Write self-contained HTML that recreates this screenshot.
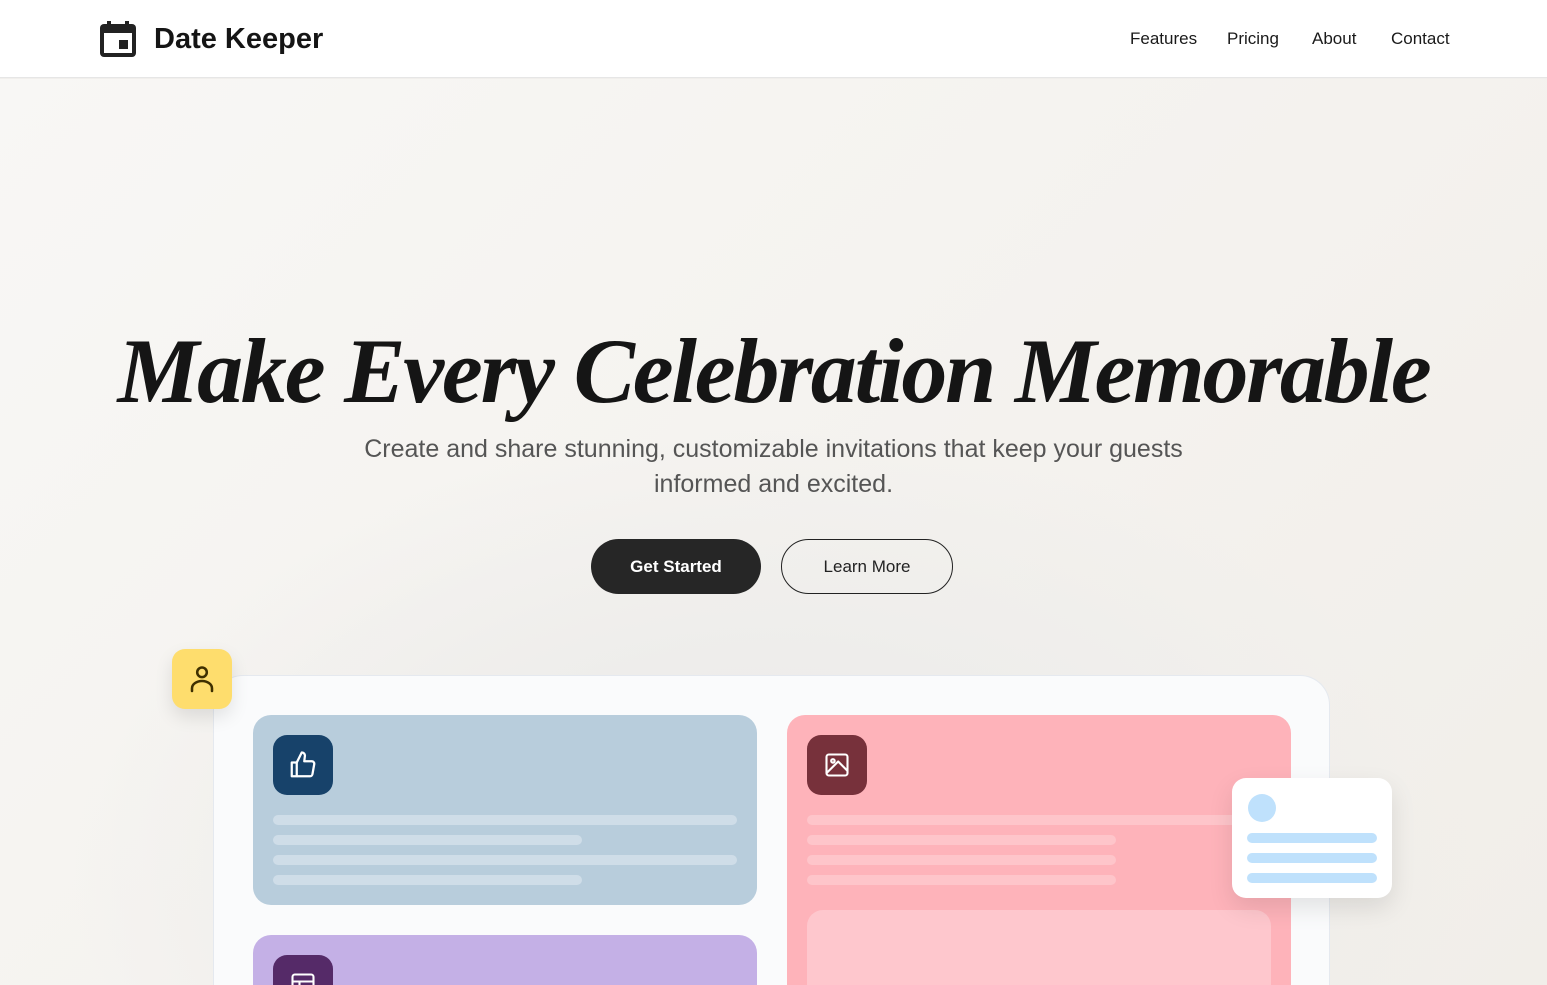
<!DOCTYPE html>
<html><head><meta charset="utf-8"><style>
*{margin:0;padding:0;box-sizing:border-box}
html,body{width:1547px;height:985px;overflow:hidden}
body{font-family:"Liberation Sans",sans-serif;background:#f1efec;position:relative}
.hdr{position:absolute;left:0;top:0;width:1547px;height:78px;background:#fff;border-bottom:1px solid #e6e6e6}
.logo{position:absolute;left:99px;top:20px;display:flex;align-items:center}
.logo span{font-size:29px;font-weight:bold;color:#151515;margin-left:17px}
.nav{position:absolute;top:29px;font-size:17px;color:#1a1a1a}
.hero{position:absolute;left:0;top:79px;width:1547px;height:906px;background:radial-gradient(ellipse 700px 450px at 773px 800px,#e8e8ea 0%,#eeedeb 50%,rgba(241,239,236,0) 100%),linear-gradient(135deg,#f8f7f5,#f1eee9)}
h1{position:absolute;left:0;width:1547px;top:318px;text-align:center;font-family:"Liberation Serif",serif;font-style:italic;font-weight:bold;font-size:92px;letter-spacing:-2.2px;color:#151515;white-space:nowrap}
.sub{position:absolute;left:0;width:1547px;top:432px;text-align:center;font-size:25px;line-height:35px;color:#555}
.btn{position:absolute;top:539px;height:55px;border-radius:28px;font-size:17px;display:flex;align-items:center;justify-content:center}
.panel{position:absolute;left:213px;top:675px;width:1117px;height:310px;background:#fafbfc;border-radius:30px 30px 0 0;border:1px solid #e5e9ef;border-bottom:none;overflow:hidden}
.card{position:absolute;border-radius:18px}
.ic{position:absolute;left:20px;top:20px;width:60px;height:60px;border-radius:14px;display:flex;align-items:center;justify-content:center}
.ln{position:absolute;left:20px;height:10px;border-radius:5px}
</style></head><body>
<div class="hdr">
<div class="logo"><svg width="38" height="38" viewBox="0 0 38 38"><rect x="8" y="1" width="4" height="6" fill="#222"/><rect x="26" y="1" width="4" height="6" fill="#222"/><rect x="1" y="4" width="36" height="33" rx="4" fill="#222"/><rect x="5" y="13" width="28" height="20" fill="#fff"/><rect x="20" y="20" width="9" height="9" fill="#222"/></svg><span>Date Keeper</span></div>
<div class="nav" style="left:1130px">Features</div>
<div class="nav" style="left:1227px">Pricing</div>
<div class="nav" style="left:1312px">About</div>
<div class="nav" style="left:1391px">Contact</div>
</div>
<div class="hero"></div>
<h1>Make Every Celebration Memorable</h1>
<div class="sub">Create and share stunning, customizable invitations that keep your guests<br>informed and excited.</div>
<div class="btn" style="left:591px;width:170px;background:#262626;color:#fff;font-weight:bold">Get Started</div>
<div class="btn" style="left:781px;width:172px;border:1.5px solid #222;color:#222">Learn More</div>
<div class="panel">
<div class="card" style="left:39px;top:39px;width:504px;height:190px;background:#b8cddc">
<div class="ic" style="background:#17426a"><svg width="30" height="30" viewBox="0 0 24 24" fill="none" stroke="#fff" stroke-width="1.8" stroke-linejoin="round"><path d="M7 10v11H3V10z"/><path d="M7 10l4-8a2.5 2.5 0 0 1 2.5 3L13 9h6a2 2 0 0 1 2 2.3l-1.4 7.8A2 2 0 0 1 17.6 21H7"/></svg></div>
<div class="ln" style="top:100px;width:464px;background:#cfdde8"></div>
<div class="ln" style="top:120px;width:309px;background:#cfdde8"></div>
<div class="ln" style="top:140px;width:464px;background:#cfdde8"></div>
<div class="ln" style="top:160px;width:309px;background:#cfdde8"></div>
</div>
<div class="card" style="left:39px;top:259px;width:504px;height:190px;background:#c4b0e6">
<div class="ic" style="background:#552a68"><svg width="28" height="28" viewBox="0 0 24 24" fill="none" stroke="#fff" stroke-width="1.8"><rect x="3" y="3" width="18" height="18" rx="2"/><path d="M3 9h18M9 9v12"/></svg></div>
</div>
<div class="card" style="left:573px;top:39px;width:504px;height:330px;background:#feb3ba">
<div class="ic" style="background:#77313b"><svg width="28" height="28" viewBox="0 0 24 24" fill="none" stroke="#fff" stroke-width="1.8" stroke-linejoin="round"><rect x="3" y="3" width="18" height="18" rx="2"/><circle cx="8.5" cy="8.5" r="1.5"/><path d="M3 19l10-10 8 8"/></svg></div>
<div class="ln" style="top:100px;width:464px;background:#fec5ca"></div>
<div class="ln" style="top:120px;width:309px;background:#fec5ca"></div>
<div class="ln" style="top:140px;width:309px;background:#fec5ca"></div>
<div class="ln" style="top:160px;width:309px;background:#fec5ca"></div>
<div style="position:absolute;left:20px;top:195px;width:464px;height:150px;border-radius:16px;background:#fec7cd"></div>
</div>
</div>
<div style="position:absolute;left:172px;top:649px;width:60px;height:60px;border-radius:13px;background:#fedd6d;box-shadow:0 8px 18px rgba(0,0,0,.1);display:flex;align-items:center;justify-content:center"><svg width="32" height="32" viewBox="0 0 24 24" fill="none" stroke="#3f3000" stroke-width="1.9" stroke-linecap="round"><circle cx="12" cy="7" r="3.6"/><path d="M4.5 21v-2a7.5 5.5 0 0 1 15 0v2"/></svg></div>
<div style="position:absolute;left:1232px;top:778px;width:160px;height:120px;border-radius:14px;background:#fff;box-shadow:0 10px 25px rgba(0,0,0,.1)">
<div style="position:absolute;left:16px;top:16px;width:28px;height:28px;border-radius:50%;background:#bfe1fc"></div>
<div style="position:absolute;left:15px;top:55px;width:130px;height:10px;border-radius:5px;background:#bfe1fc"></div>
<div style="position:absolute;left:15px;top:75px;width:130px;height:10px;border-radius:5px;background:#bfe1fc"></div>
<div style="position:absolute;left:15px;top:95px;width:130px;height:10px;border-radius:5px;background:#bfe1fc"></div>
</div>
</body></html>
